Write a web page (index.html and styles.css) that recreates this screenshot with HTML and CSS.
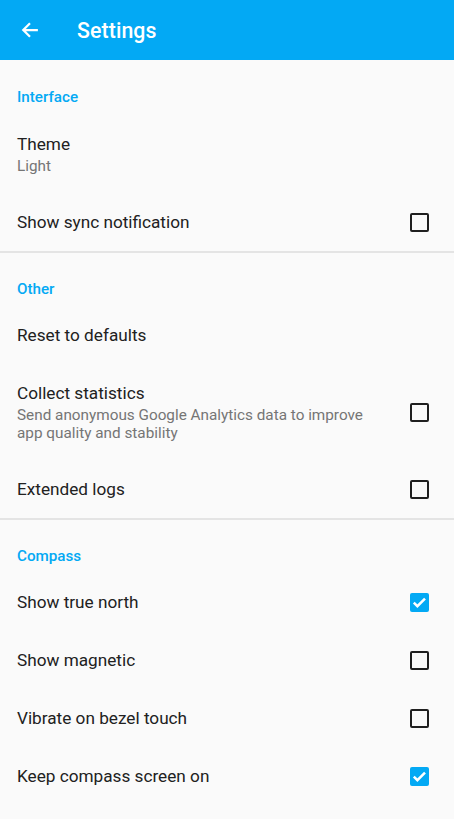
FILE: index.html
```html
<!DOCTYPE html>
<html>
<head>
<meta charset="utf-8">
<link rel="stylesheet" href="styles.css">
</head>
<body>
<header class="appbar">
  <svg class="back" width="18" height="18" viewBox="0 0 16 16"><path d="M15 8H2M8 2L2 8l6 6" fill="none" stroke="#fff" stroke-width="2" stroke-linejoin="miter"/></svg>
  <h1 class="title">Settings</h1>
</header>
<main class="list">
  <section class="section first">
    <div class="cat">Interface</div>
    <div class="row two"><div class="text"><div class="t">Theme</div><div class="s">Light</div></div></div>
    <div class="row"><div class="text"><div class="t">Show sync notification</div></div><span class="cb"></span></div>
  </section>
  <section class="section second">
    <div class="cat">Other</div>
    <div class="row"><div class="text"><div class="t">Reset to defaults</div></div></div>
    <div class="row"><div class="text"><div class="t">Collect statistics</div><div class="s">Send anonymous Google Analytics data to improve app quality and stability</div></div><span class="cb"></span></div>
    <div class="row"><div class="text"><div class="t">Extended logs</div></div><span class="cb"></span></div>
  </section>
  <section class="section last">
    <div class="cat">Compass</div>
    <div class="row"><div class="text"><div class="t">Show true north</div></div><span class="cb on"><svg width="19" height="19" viewBox="0 0 19 19"><path d="M3.8 9.6l3.6 3.6 7.6-7.6" fill="none" stroke="#fff" stroke-width="2.5"/></svg></span></div>
    <div class="row"><div class="text"><div class="t">Show magnetic</div></div><span class="cb"></span></div>
    <div class="row"><div class="text"><div class="t">Vibrate on bezel touch</div></div><span class="cb"></span></div>
    <div class="row"><div class="text"><div class="t">Keep compass screen on</div></div><span class="cb on"><svg width="19" height="19" viewBox="0 0 19 19"><path d="M3.8 9.6l3.6 3.6 7.6-7.6" fill="none" stroke="#fff" stroke-width="2.5"/></svg></span></div>
  </section>
</main>
</body>
</html>
```
FILE: styles.css
```css
* { box-sizing: border-box; }
html, body { margin: 0; padding: 0; }
body {
  width: 454px;
  height: 819px;
  overflow: hidden;
  background: #fafafa;
  font-family: Roboto, "Noto Sans", sans-serif;
  color: #212121;
}
.appbar {
  height: 60px;
  background: #03a9f4;
  display: flex;
  align-items: center;
  padding-left: 21px;
}
.back { display: block; }
.title {
  margin: 0 0 0 38px;
  font-size: 21.3px;
  font-weight: 500;
  color: #fff;
  letter-spacing: 0.1px;
}
.section { border-bottom: 2px solid #e4e4e4; }
.section.last { border-bottom: none; }
.cat {
  height: 54px;
  padding: 28px 17px 0;
  font-size: 15.2px;
  line-height: 18px;
  font-weight: 500;
  color: #03a9f4;
}
.second .cat, .last .cat { height: 53px; padding-top: 27px; }
.row {
  display: flex;
  align-items: center;
  padding: 18px 25px 18px 17px;
  min-height: 58px;
}
.row.two { padding-top: 19px; }
.text { flex: 1; padding-right: 40px; }
.t { font-size: 17.2px; line-height: 22px; color: #212121; }
.s { font-size: 15.3px; line-height: 18px; color: #757575; margin-top: 2px; }
.cb {
  width: 19px;
  height: 19px;
  border: 2px solid #1f1f1f;
  border-radius: 2px;
  flex: none;
}
.cb.on { background: #03a9f4; border: none; }
.cb svg { display: block; }
```
